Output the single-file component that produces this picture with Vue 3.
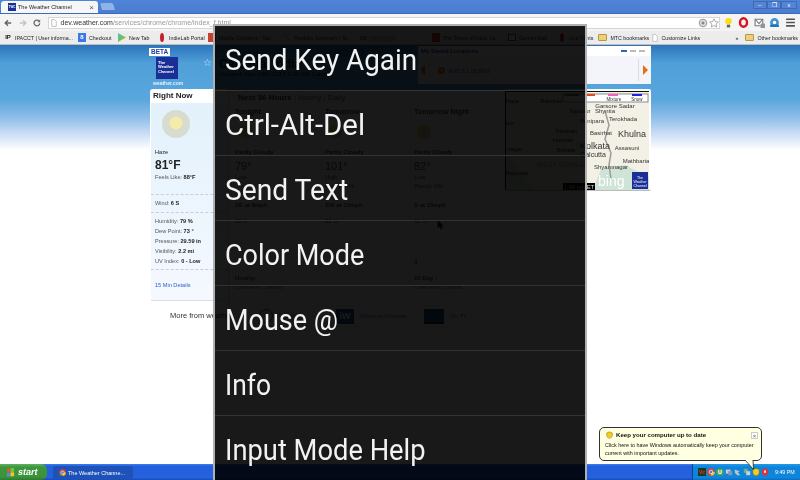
<script setup>
// stretch: the reference's text is squeezed sideways, each label by a slightly different amount
const menuItems = [
  { label: 'Send Key Again', stretch: 0.928 },
  { label: 'Ctrl-Alt-Del', stretch: 0.98 },
  { label: 'Send Text', stretch: 0.94 },
  { label: 'Color Mode', stretch: 0.9 },
  { label: 'Mouse @', stretch: 0.9 },
  { label: 'Info', stretch: 0.88 },
  { label: 'Input Mode Help', stretch: 0.91 }
]

const leftMarks = [
  { label: 'IPACCT | User informa...', kind: 'ip', w: 74 },
  { label: 'Checkout', kind: 'g', w: 40 },
  { label: 'New Tab', kind: 'play', w: 40 },
  { label: 'IndieLab Portal', kind: 'pin', w: 50 },
  { label: 'Mobile Solutions : Tas...', kind: 'red', w: 75 },
  { label: 'Portfolio Summary | St...', kind: 'line', w: 77 },
  { label: 'BB ▯▯▯▯▯▯▯▯▯', kind: 'none', w: 72 },
  { label: 'The Times of India: La...', kind: 'red', w: 76 },
  { label: 'Gemail Mail', kind: 'mail', w: 50 },
  { label: 'Live Fonts', kind: 'pin', w: 36 }
]

const details = [
  ['Humidity:', '79 %'],
  ['Dew Point:', '73 °'],
  ['Pressure:', '29.59 in'],
  ['Visibility:', '2.2 mi'],
  ['UV Index:', '0 - Low']
]

const forecast = [
  { name: 'Tonight', temp: '79°', hl: 'Low', precip: '', wind: 'SE at 8mph', zero: '', head: 'Hourly:', links: 'Overview | Details' },
  { name: 'Tomorrow', temp: '101°', hl: 'High', precip: 'Precip: 0%', wind: 'SW at 15mph', zero: '', head: '', links: '' },
  { name: 'Tomorrow Night', temp: '82°', hl: 'Low', precip: 'Precip: 0%', wind: 'S at 15mph', zero: '0', head: '10 Day :', links: 'Overview | Details' }
]

const mapLabels = [
  { t: 'Nara', x: 7, y: 12, s: 6 },
  { t: 'Barchar', x: 46, y: 12, s: 6 },
  { t: 'pur', x: 5, y: 34, s: 6 },
  { t: 'Garsore Sadar', x: 110, y: 17, s: 6 },
  { t: 'Santour', x: 75, y: 22, s: 6 },
  { t: 'Shyntia', x: 100, y: 22, s: 6 },
  { t: 'Banipara', x: 87, y: 32, s: 6 },
  { t: 'Terokhada', x: 118, y: 30, s: 6 },
  { t: 'Panihati', x: 61, y: 42, s: 6 },
  { t: 'Basirhat', x: 96, y: 44, s: 6 },
  { t: 'Khulna', x: 127, y: 46, s: 9 },
  { t: 'Howrah', x: 58, y: 51, s: 6 },
  { t: 'Kolkata', x: 90, y: 58, s: 9 },
  { t: 'Assasuni', x: 122, y: 59, s: 6 },
  { t: 'nagar', x: 10, y: 60, s: 6 },
  { t: 'Behala', x: 61, y: 61, s: 6 },
  { t: 'Calcutta', x: 88, y: 66, s: 7 },
  { t: 'Mathbaria', x: 131, y: 72, s: 6 },
  { t: 'Shyamnagar', x: 106, y: 78, s: 6 },
  { t: 'Barpada', x: 12, y: 84, s: 6 }
]
</script>

<template>
  <div class="screen">
    <div class="desktop">
      <div class="tabstrip">
        <div class="tab">
          <span class="favicon">TWC</span>
          <span class="tab-title">The Weather Channel</span>
          <span class="tab-close">×</span>
        </div>
        <div class="new-tab"></div>
        <div class="win-btns">
          <span>–</span><span>❐</span><span class="win-x">x</span>
        </div>
      </div>

      <div class="toolbar">
        <svg class="nav-ic" viewBox="0 0 10 10"><path d="M9 5H2M5 1.500L1.500 5 5 8.500" fill="none" stroke="#666" stroke-width="1.800"/></svg>
        <svg class="nav-ic" viewBox="0 0 10 10"><path d="M1 5h7M5 1.500L8.500 5 5 8.500" fill="none" stroke="#c4c4c4" stroke-width="1.800"/></svg>
        <svg class="nav-ic" viewBox="0 0 10 10"><path d="M8.500 5.500A3.600 3.600 0 1 1 7.400 2.300" fill="none" stroke="#666" stroke-width="1.600"/><path d="M9 .6V4H5.600z" fill="#666"/></svg>
        <div class="omnibox">
          <svg class="doc" viewBox="0 0 8 10"><path d="M1 .5h4l2 2v7H1z" fill="#fff" stroke="#999" stroke-width=".8"/></svg>
          <span class="url"><b>dev.weather.com</b>/services/chrome/chrome/index_f.html</span>
          <span class="omni-end">
            <svg class="ext" viewBox="0 0 10 10"><circle cx="5" cy="5" r="3.800" fill="#ddd" stroke="#999"/><circle cx="5" cy="5" r="1.500" fill="#888"/></svg>
            <svg class="ext" viewBox="0 0 10 10"><path d="M5 .8l1.300 2.800 3 .4-2.200 2 .6 3L5 7.500 2.300 9l.6-3-2.200-2 3-.4z" fill="#fff" stroke="#999" stroke-width=".8"/></svg>
          </span>
        </div>
        <div class="tools">
          <svg viewBox="0 0 10 10"><circle cx="5" cy="3.800" r="3" fill="#f7df1e"/><rect x="3.500" y="7" width="3" height="2.500" fill="#666"/></svg>
          <svg viewBox="0 0 10 10"><ellipse cx="5" cy="5" rx="3.200" ry="3.800" fill="none" stroke="#d9131f" stroke-width="2.200"/></svg>
          <svg viewBox="0 0 10 10"><path d="M1 2h7v6H1z" fill="#fff" stroke="#777"/><path d="M1.500 2.500L4.500 6 7.500 2.500" fill="none" stroke="#777"/><rect x="6" y="6" width="4" height="4" fill="#8a98a6"/></svg>
          <svg viewBox="0 0 10 10"><circle cx="5" cy="5" r="4" fill="#3f94d6"/><circle cx="5" cy="5" r="1.600" fill="#fff"/><path d="M1 7h8v2H1z" fill="#1f6fb0"/></svg>
          <svg viewBox="0 0 10 10"><path d="M1 2h8M1 5h8M1 8h8" stroke="#555" stroke-width="1.500"/></svg>
        </div>
      </div>

      <div class="bookmarks">
        <div class="marks-left">
          <span v-for="m in leftMarks" :key="m.label" class="mark" :style="{ width: m.w + 'px' }">
            <i v-if="m.kind !== 'none'" class="mark-ic" :class="'ic-' + m.kind">{{ m.kind === 'ip' ? 'IP' : m.kind === 'g' ? '8' : '' }}</i>
            {{ m.label }}
          </span>
        </div>
        <div class="marks-right">
          <span class="mark mtc"><i class="folder"></i>MTC bookmarks</span>
          <span class="mark custom"><svg class="mark-doc" viewBox="0 0 8 10"><path d="M1 .5h4l2 2v7H1z" fill="#fff" stroke="#aaa" stroke-width=".8"/></svg>Customize Links</span>
          <span class="chev">»</span>
          <span class="mark"><i class="folder"></i>Other bookmarks</span>
        </div>
      </div>

      <div class="page">
        <div class="wx">
          <div class="wx-head">
            <div class="brand">
              <span class="beta">BETA</span>
              <div class="logo">The<br>Weather<br>Channel</div>
              <span class="brand-url">weather.com</span>
            </div>
            <div class="place">
              <span class="star">☆</span>
              <div>
                <div class="city">Calcutta, India</div>
                <div class="updated">Updated: Nov 18th, 2013 9:20 PM Calcutta</div>
              </div>
              <div class="place-ics"><i></i><i></i><i></i></div>
            </div>
            <div class="saved">
              <div class="saved-top">
                <span class="saved-title">My Saved Locations</span>
                <span class="dashes"><i class="on"></i><i></i><i></i></span>
              </div>
              <div class="saved-body">
                <span class="arrow-l"></span>
                <span class="add"><i>+</i>Add a Location</span>
                <span class="saved-sep"></span>
                <span class="arrow-r"></span>
              </div>
            </div>
          </div>

          <div class="wx-main">
            <div class="now">
              <div class="now-title">Right Now</div>
              <div class="now-panel">
                <svg class="sun" viewBox="0 0 30 30">
                  <circle cx="15" cy="15" r="14" fill="#d8dcd0"/>
                  <circle cx="15" cy="14" r="6.500" fill="#f3eda8"/>
                </svg>
                <div class="cond">Haze</div>
                <div class="temp">81°F</div>
                <div class="row">Feels Like: <b>88°F</b></div>
                <div class="group g-wind">
                  <div class="row">Wind: <b>6 S</b></div>
                </div>
                <div class="group g-detail">
                  <div v-for="d in details" :key="d[0]" class="row">{{ d[0] }} <b>{{ d[1] }}</b></div>
                </div>
                <div class="group g-link">
                  <a class="more-link">15 Min Details</a>
                </div>
              </div>
              <div class="now-more">More from weather</div>
            </div>

            <div class="centre">
              <div class="fc-card">
                <div class="fc-tabs"><b>Next 36 Hours</b> | <a>Hourly</a> | <a>Daily</a></div>
                <div class="fc-grid">
                  <div v-for="f in forecast" :key="f.name" class="fc-col">
                    <div class="fc-name">{{ f.name }}</div>
                    <svg class="fc-ic" viewBox="0 0 20 20"><circle cx="10" cy="10" r="8" fill="#f2d25c"/><circle cx="12" cy="12" r="5" fill="#ccc"/></svg>
                    <div class="fc-cond">Partly Cloudy</div>
                    <div class="fc-temp">{{ f.temp }}</div>
                    <div class="fc-small">{{ f.hl }}</div>
                    <div class="fc-small fc-precip">{{ f.precip }}</div>
                    <div class="fc-wind">{{ f.wind }}</div>
                    <div class="fc-small fc-hum">82 %</div>
                    <div class="fc-small fc-zero">{{ f.zero }}</div>
                    <div class="fc-links">
                      <b>{{ f.head }}</b>
                      <a>{{ f.links }}</a>
                    </div>
                  </div>
                </div>
              </div>
              <div class="more-row">
                <div class="more-card c-one"><i class="round"></i><span>Weather</span></div>
                <div class="more-card c-two"><i class="iw">iW</i><a>iWitness Weather</a></div>
                <div class="more-card c-three"><i class="tv"></i><a>On TV</a></div>
              </div>
            </div>

            <div class="map-card">
              <svg class="map" viewBox="0 0 144 99">
                <rect width="144" height="99" fill="#f3f1e6"/>
                <path d="M0 60L30 99H0zM88 99L96 78 120 74 144 86V99z" fill="#cfe3d6"/>
                <path d="M100 20L104 34 100 48 106 62 104 74 106 88" fill="none" stroke="#9c9c9c" stroke-width="1.500"/>
                <text x="57" y="76" font-size="7" fill="#999" text-anchor="middle" class="map-sans">WEST BENGAL</text>
                <text v-for="l in mapLabels" :key="l.t" :x="l.x" :y="l.y" :font-size="l.s" text-anchor="middle" class="map-txt">{{ l.t }}</text>
                <path d="M.5 99V.5H144" fill="none" stroke="#111"/>
                <rect x="58" y="3" width="85" height="8" fill="#fff" stroke="#444" stroke-width=".6"/>
                <rect x="60" y="3" width="14" height="2" fill="#2f8f2f"/>
                <rect x="82" y="3" width="8" height="2" fill="#e64a19"/>
                <rect x="103" y="3" width="10" height="2" fill="#f062c0"/>
                <rect x="127" y="3" width="10" height="2" fill="#22d"/>
                <text x="109" y="10" font-size="4.500" text-anchor="middle" class="map-txt">Mixture</text>
                <text x="132" y="10" font-size="4.500" text-anchor="middle" class="map-txt">Snow</text>
                <text x="93" y="95" font-size="14" fill="#fff" class="map-sans">bing</text>
                <rect x="58" y="92" width="32" height="7" fill="#000"/>
                <text x="74" y="98" font-size="6" text-anchor="middle" fill="#ddd" class="map-sans">1:40 pm ET</text>
                <rect x="127" y="81" width="16" height="17" fill="#1b2f96"/>
                <text x="135" y="88" font-size="3.500" text-anchor="middle" fill="#fff" class="map-sans">The</text>
                <text x="135" y="92" font-size="3.500" text-anchor="middle" fill="#fff" class="map-sans">Weather</text>
                <text x="135" y="96" font-size="3.500" text-anchor="middle" fill="#fff" class="map-sans">Channel</text>
              </svg>
            </div>
          </div>
        </div>
      </div>

      <div class="taskbar">
        <div class="start">
          <svg class="flag" viewBox="0 0 10 10">
            <path d="M1 1l3.500-.5v4L1 5z" fill="#e8552b"/><path d="M5 .4L9 0v4.300l-4 .3z" fill="#7cc242"/>
            <path d="M1 5.500l3.500-.4v4L1 9.600z" fill="#4a90e0"/><path d="M5 5l4-.3v4.300l-4 .4z" fill="#f7c52b"/>
          </svg>
          <span>start</span>
        </div>
        <div class="task-btn">
          <svg class="chrome" viewBox="0 0 10 10"><circle cx="5" cy="5" r="4.800" fill="#e0442e"/><path d="M5 5L.800 7.500A4.800 4.800 0 0 0 5 9.800z" fill="#3ca04c"/><path d="M5 5v4.800A4.800 4.800 0 0 0 9.800 5z" fill="#f5c518"/><circle cx="5" cy="5" r="2.200" fill="#3c7fe0" stroke="#fff" stroke-width=".8"/></svg>
          <span>The Weather Channe...</span>
        </div>
        <div class="tray">
          <i class="t-vc">Vc</i>
          <svg viewBox="0 0 10 10"><circle cx="5" cy="5" r="4.800" fill="#e0442e"/><path d="M5 5v4.800A4.800 4.800 0 0 0 9.800 5z" fill="#f5c518"/><circle cx="5" cy="5" r="2.200" fill="#3c7fe0" stroke="#fff" stroke-width=".8"/></svg>
          <svg viewBox="0 0 10 10"><circle cx="5" cy="5" r="4.800" fill="#4aa55a"/><path d="M3.500 2.500v3a1.500 1.500 0 0 0 3 0v-3" fill="none" stroke="#fff" stroke-width="1.300"/></svg>
          <svg viewBox="0 0 10 10"><rect x="1" y="2" width="6" height="5" fill="#c5ced8"/><rect x="4" y="4" width="5" height="5" fill="#8796ab"/></svg>
          <svg viewBox="0 0 10 10"><path d="M1 2l6 2-2 2 3 3H4L1 6z" fill="#b6c4cc"/></svg>
          <svg viewBox="0 0 10 10"><rect x="1" y="1" width="5" height="5" fill="#7fae70"/><rect x="4" y="4" width="5" height="5" fill="#c9d1dc"/></svg>
          <svg viewBox="0 0 10 10"><path d="M5 .5l4 1.500v3.500C9 8 7 9 5 9.800 3 9 1 8 1 5.500V2z" fill="#f2cc1f" stroke="#735d00" stroke-width=".5"/></svg>
          <svg viewBox="0 0 10 10"><path d="M5 .5l4 1.500v3.500C9 8 7 9 5 9.800 3 9 1 8 1 5.500V2z" fill="#d9343a"/><rect x="4" y="3" width="2" height="3" fill="#fff"/></svg>
          <span class="clock">9:49 PM</span>
        </div>
      </div>
    </div>

    <svg class="cursor" viewBox="0 0 8 12"><path d="M1 1v9l2-2 1.500 3 1.500-.7L4.500 7.500H7z" fill="#111" stroke="#333" stroke-width=".6"/></svg>

    <div class="menu">
      <div v-for="item in menuItems" :key="item.label" class="menu-item">
        <span class="menu-label" :style="{ transform: 'scaleX(' + item.stretch + ')' }">{{ item.label }}</span>
      </div>
    </div>

    <div class="balloon">
      <div class="bl-head">
        <svg class="bl-shield" viewBox="0 0 10 10"><path d="M5 .5l4 1.500v3.500C9 8 7 9 5 9.800 3 9 1 8 1 5.500V2z" fill="#f2cc1f" stroke="#735d00" stroke-width=".6"/></svg>
        <b>Keep your computer up to date</b>
        <span class="bl-close">×</span>
      </div>
      <div class="bl-text">Click here to have Windows automatically keep your computer<br>current with important updates.</div>
      <svg class="bl-tail" viewBox="0 0 9 10"><path d="M0 0L8.500 9.500 8 0" fill="#ffffe1" stroke="#222" stroke-width=".8"/></svg>
    </div>
  </div>
</template>

<style>
html, body { margin: 0; background: #fff; }
</style>

<style scoped>
.screen {
  position: relative;
  width: 800px;
  height: 480px;
  overflow: hidden;
  font-family: "Liberation Sans", Arial, sans-serif;
  background: #fff;
}
.desktop {
  display: flex;
  flex-direction: column;
  height: 100%;
  filter: blur(0.35px);
}

/* ── Chrome ── */
.tabstrip {
  height: 13px;
  flex: none;
  display: flex;
  align-items: flex-end;
  background: linear-gradient(#5084d8, #4a7dd1);
  padding-left: 1px;
}
.tab {
  width: 97px;
  height: 12px;
  background: #f6f6f6;
  border-radius: 3px 3px 0 0;
  display: flex;
  align-items: center;
  padding-left: 7px;
  box-sizing: border-box;
  font-size: 5.500px;
  color: #222;
}
.favicon {
  width: 8px;
  height: 8px;
  background: #1a2f96;
  color: #fff;
  font-size: 3px;
  font-weight: 700;
  line-height: 8px;
  text-align: center;
  margin-right: 2px;
}
.tab-title { flex: 1; }
.tab-close { margin-right: 4px; font-size: 8px; color: #555; }
.new-tab {
  width: 13px;
  height: 7px;
  margin: 0 0 3px 3px;
  background: #8db3e8;
  border-radius: 2px 2px 0 0;
  transform: skewX(15deg);
}
.win-btns {
  margin-left: auto;
  margin-bottom: 4px;
  margin-right: 3px;
  display: flex;
  color: #fff;
  font-size: 6px;
  line-height: 7px;
}
.win-btns span {
  width: 14px;
  text-align: center;
  background: #5584d4;
  border: 1px solid #3f6bb5;
  box-sizing: border-box;
  height: 8px;
}
.win-btns .win-x { width: 16px; }
.toolbar {
  height: 18px;
  flex: none;
  display: flex;
  align-items: center;
  background: #f4f4f4;
  padding: 0 4px;
  box-sizing: border-box;
  border-top: 1px solid #3b6ab8;
}
.nav-ic { width: 8px; height: 8px; margin-right: 6.500px; flex: none; }
.omnibox {
  width: 672px;
  height: 12px;
  flex: none;
  background: #fff;
  border: 1px solid #d6d6d6;
  box-sizing: border-box;
  display: flex;
  align-items: center;
  padding-left: 2px;
  font-size: 7px;
  color: #999;
}
.doc { width: 6px; height: 8px; margin-right: 4px; }
.url b { font-weight: 400; color: #333; }
.omni-end { margin-left: auto; display: flex; gap: 1px; }
.ext { width: 10px; height: 10px; }
.tools {
  flex: 1;
  display: flex;
  justify-content: space-between;
  padding: 0 0 0 3px;
}
.tools svg { width: 11px; height: 11px; }
.bookmarks {
  height: 14px;
  flex: none;
  display: flex;
  align-items: center;
  justify-content: space-between;
  background: #ececec;
  border-bottom: 1px solid #bdbdbd;
  box-sizing: border-box;
  padding: 0 2px 0 4px;
  font-size: 5.300px;
  color: #222;
  white-space: nowrap;
}
.marks-left, .marks-right { display: flex; align-items: center; }
.mark { display: inline-flex; align-items: center; gap: 3px; flex: none; overflow: hidden; }
.mtc { width: 54px; }
.custom { width: 83px; }
.mark-ic {
  width: 8px;
  height: 9px;
  flex: none;
  font-style: normal;
  font-size: 6px;
  font-weight: 700;
  line-height: 9px;
  text-align: center;
}
.ic-ip { color: #111; }
.ic-g { background: #3b78e7; color: #fff; }
.ic-play { background: linear-gradient(135deg, #4db6e8, #7cc242 60%, #f2a01f); clip-path: polygon(0 0, 100% 50%, 0 100%); }
.ic-pin { width: 4px; background: #c8202a; border-radius: 50%; margin: 0 2px; }
.ic-red { background: #c8402e; }
.ic-line { background: linear-gradient(45deg, transparent 45%, #777 50%, transparent 55%); }
.ic-mail { background: #fff; border: 1px solid #c33; box-sizing: border-box; height: 7px; }
.folder {
  width: 9px;
  height: 7px;
  flex: none;
  background: #f0cf7b;
  border: 1px solid #b89642;
  border-radius: 1px;
  box-sizing: border-box;
}
.mark-doc { width: 6px; height: 8px; flex: none; }
.chev { width: 10px; flex: none; }

/* ── Weather page ── */
.page {
  flex: 1;
  min-height: 0;
  display: flex;
  padding-left: 150px;
  background: linear-gradient(#2b74ba 0, #4f9fd8 18px, #5aa7de 55px, #8dbde8 72px, #c8dcf4 88px, #fff 105px);
}
.wx { width: 501px; display: flex; flex-direction: column; }
.wx-head { height: 44px; flex: none; display: flex; padding-top: 1px; box-sizing: border-box; }
.brand { width: 30px; flex: none; display: flex; flex-direction: column; align-items: flex-start; margin-top: 2px; }
.beta {
  background: #fff;
  color: #1a3ea0;
  font-size: 6.500px;
  font-weight: 700;
  padding: 0 2px;
  line-height: 8px;
  margin-left: -1px;
}
.logo {
  width: 22px;
  height: 22px;
  margin: 1px 0 0 6px;
  background: #1a2f96;
  color: #fff;
  font-size: 4px;
  font-weight: 700;
  line-height: 4.400px;
  padding: 4px 0 0 2px;
  box-sizing: border-box;
}
.brand-url { font-size: 5px; font-weight: 700; color: #e6f0fa; margin: 1px 0 0 3px; white-space: nowrap; }
.place { display: flex; width: 238px; flex: none; gap: 7px; padding: 11px 0 0 23px; box-sizing: border-box; color: #111; }
.star { color: #cfe2f4; font-size: 10px; line-height: 12px; }
.city { font-size: 12px; font-weight: 700; line-height: 14px; white-space: nowrap; }
.updated { font-size: 6px; line-height: 7px; white-space: nowrap; }
.place-ics { display: flex; gap: 8px; margin-top: -9px; }
.place-ics i { width: 6px; height: 6px; border: 1px solid #456; border-radius: 50%; }
.saved { flex: 1; height: 38px; background: #fff; border-radius: 0 0 3px 3px; }
.saved-top { height: 9px; display: flex; justify-content: space-between; align-items: center; padding: 0 6px 0 3px; font-size: 6px; }
.saved-title { color: #1a3ea0; font-weight: 700; }
.dashes { display: flex; gap: 3px; }
.dashes i { width: 6px; height: 2px; background: #bbb; }
.dashes i.on { background: #2a64d0; }
.saved-body { height: 28px; margin-top: 1px; background: #f3f5fb; display: flex; align-items: center; padding: 0 3px 0 2px; font-size: 6.500px; color: #4a6fc0; }
.arrow-l { border: 5px solid transparent; border-right-color: #e86f10; border-left-width: 0; }
.arrow-r { border: 5px solid transparent; border-left-color: #e86f10; border-right-width: 0; margin-left: 4px; }
.add { display: flex; gap: 3px; margin-left: 13px; align-items: center; white-space: nowrap; }
.add i { width: 7px; height: 7px; border-radius: 50%; background: #e86f10; color: #fff; font-style: normal; line-height: 7px; text-align: center; }
.saved-sep { width: 1px; height: 22px; margin-left: auto; background: #ddd; }
.wx-main { display: flex; align-items: flex-start; }
.now { width: 78px; flex: none; background: #fff; border-radius: 3px 3px 0 0; }
.now-title { height: 14px; font-size: 8px; line-height: 14px; font-weight: 700; padding-left: 3px; color: #222; }
.now-panel {
  margin-left: 1px;
  height: 197px;
  padding: 2px 0 0 4px;
  background: linear-gradient(#e2f1fb, #f5f9ff);
  box-sizing: border-box;
  font-size: 5.600px;
  color: #555;
}
.sun { width: 30px; height: 30px; display: block; margin: 4px 0 0 6px; }
.cond { color: #222; margin-top: 10px; line-height: 7px; }
.temp { font-size: 12px; font-weight: 700; line-height: 14px; margin-top: 2px; color: #222; }
.row { line-height: 10px; white-space: nowrap; }
.row b { color: #222; }
.group { margin-left: -4px; padding: 3px 0 0 4px; border-top: 1px dashed #ccd; }
.g-wind { margin-top: 12px; }
.g-detail { margin-top: 4px; }
.g-link { margin-top: 3px; padding-top: 12px; }
.more-link { color: #2a5fd0; }
.now-more { height: 30px; margin-left: 1px; font-size: 7.500px; line-height: 30px; color: #333; padding-left: 19px; white-space: nowrap; border-top: 1px solid #ddd; box-sizing: border-box; }
.centre { width: 277px; flex: none; background: #fff; border-top: 1px solid #ddd; margin-top: 1px; }
.fc-card { height: 214px; padding-left: 2px; box-sizing: border-box; border-left: 1px solid #ccc; }
.fc-tabs { font-size: 8px; line-height: 14px; padding-left: 7px; color: #888; }
.fc-tabs b { color: #333; }
.fc-tabs a { color: #4466aa; }
.fc-grid { display: grid; grid-template-columns: 90px 89px 80px; margin-top: 2px; }
.fc-col { font-size: 6px; color: #444; padding-left: 4px; }
.fc-col + .fc-col { border-left: 1px solid #e4e4e4; padding-left: 3px; }
.fc-name { font-size: 7.200px; font-weight: 700; line-height: 10px; white-space: nowrap; }
.fc-ic { width: 18px; height: 18px; display: block; margin: 6px 0 0 1px; }
.fc-cond { font-weight: 700; margin-top: 7px; line-height: 8px; }
.fc-temp { font-size: 11px; line-height: 14px; margin-top: 3px; }
.fc-small { line-height: 8px; }
.fc-precip { height: 9px; margin-top: 1px; }
.fc-wind { font-weight: 700; margin-top: 10px; line-height: 8px; }
.fc-hum { margin-top: 8px; }
.fc-zero { height: 8px; margin-top: 33px; font-weight: 700; }
.fc-links { margin-top: 8px; line-height: 8px; display: flex; flex-direction: column; }
.fc-links b, .fc-links a { min-height: 8px; }
.fc-links a { color: #4466aa; margin-top: 1px; }
.more-row { display: flex; padding-left: 22px; font-size: 6px; color: #4466aa; }
.more-card { height: 22px; display: flex; align-items: center; gap: 6px; border: 1px solid #e8e8e8; border-radius: 2px; box-sizing: border-box; flex: none; white-space: nowrap; }
.c-one { width: 80px; padding-left: 8px; }
.c-two { width: 81px; padding-left: 5px; }
.c-three { width: 54px; margin-left: 6px; padding-left: 6px; }
.round { width: 14px; height: 14px; border: 1px solid #456; border-radius: 50%; box-sizing: border-box; }
.iw { width: 18px; height: 15px; background: #1f4f9a; color: #fff; font-style: normal; font-weight: 700; font-size: 9px; line-height: 15px; text-align: center; }
.tv { width: 20px; height: 13px; background: #1f4f9a; border-bottom: 2px solid #123; }
.map-card { width: 146px; flex: none; background: #fff; height: 102px; box-sizing: border-box; padding-top: 2px; border-radius: 2px; border-bottom: 1px solid #bbb; }
.map { display: block; width: 144px; height: 99px; }
.map-txt { font-family: "Liberation Sans", Arial, sans-serif; fill: #333; }
.map-sans { font-family: "Liberation Sans", Arial, sans-serif; }

/* ── Taskbar ── */
.taskbar {
  height: 16px;
  flex: none;
  display: flex;
  align-items: stretch;
  background: linear-gradient(#3a7ff0 0, #245edb 15%, #2562df 85%, #1b48b0);
  color: #fff;
}
.start {
  width: 47px;
  display: flex;
  align-items: center;
  gap: 3px;
  padding-left: 6px;
  box-sizing: border-box;
  background: linear-gradient(#5fb35e, #3d953d 20%, #3b933b 80%, #2e7a2e);
  border-radius: 0 6px 6px 0;
  font-size: 9px;
  font-style: italic;
  font-weight: 700;
}
.flag { width: 9px; height: 9px; flex: none; }
.task-btn {
  width: 80px;
  margin: 2px 0 1px 6px;
  display: flex;
  align-items: center;
  gap: 2px;
  padding-left: 6px;
  box-sizing: border-box;
  background: #1e52b8;
  border-radius: 2px;
  font-size: 5.500px;
  white-space: nowrap;
}
.chrome { width: 7px; height: 7px; flex: none; }
.tray {
  margin-left: auto;
  width: 108px;
  display: flex;
  align-items: center;
  gap: 1px;
  padding-left: 5px;
  box-sizing: border-box;
  background: linear-gradient(#1d9ce8, #0f83d9 20%, #0f86db 85%, #0c6bbd);
  border-left: 1px solid #0a3f9e;
}
.tray svg { width: 8px; height: 8px; flex: none; }
.t-vc { width: 8px; height: 8px; flex: none; background: #1c3a22; color: #e33; font-size: 5px; font-style: normal; font-weight: 700; line-height: 8px; text-align: center; }
.clock { margin-left: 5px; font-size: 5.300px; white-space: nowrap; }

/* ── Overlays ── */
.cursor { position: absolute; left: 437px; top: 219px; width: 7px; height: 11px; }
.menu {
  position: absolute;
  left: 213px;
  top: 24px;
  width: 374px;
  height: 456px;
  box-sizing: border-box;
  border: solid #b0b0b0;
  border-width: 2px 2px 0;
  background: rgba(0, 0, 0, 0.9);
  overflow: hidden;
  font-family: Roboto, "Liberation Sans", sans-serif;
}
.menu-item {
  height: 65px;
  line-height: 68px;
  box-sizing: border-box;
  border-bottom: 1px solid #333;
  padding-left: 10px;
  font-size: 30px;
  color: #f2f2f2;
  white-space: nowrap;
}
.menu-label {
  display: inline-block;
  transform-origin: left center;
  filter: blur(0.3px);
}
.balloon {
  position: absolute;
  left: 599px;
  top: 427px;
  width: 163px;
  height: 34px;
  box-sizing: border-box;
  padding: 3px 3px 0 6px;
  background: #ffffe1;
  border: 1px solid #333;
  border-radius: 5px;
  color: #111;
  filter: blur(0.3px);
}
.bl-head { display: flex; align-items: center; gap: 3px; font-size: 6.100px; line-height: 8px; }
.bl-shield { width: 7px; height: 8px; flex: none; }
.bl-close {
  margin-left: auto;
  width: 7px;
  height: 7px;
  line-height: 6px;
  text-align: center;
  border: 1px solid #ccc;
  background: #fff;
  color: #666;
  box-sizing: border-box;
}
.bl-text { margin-top: 3px; margin-left: -1px; font-size: 5.400px; line-height: 7.500px; white-space: nowrap; }
.bl-tail { position: absolute; left: 145px; top: 32px; width: 9px; height: 10px; }
</style>
